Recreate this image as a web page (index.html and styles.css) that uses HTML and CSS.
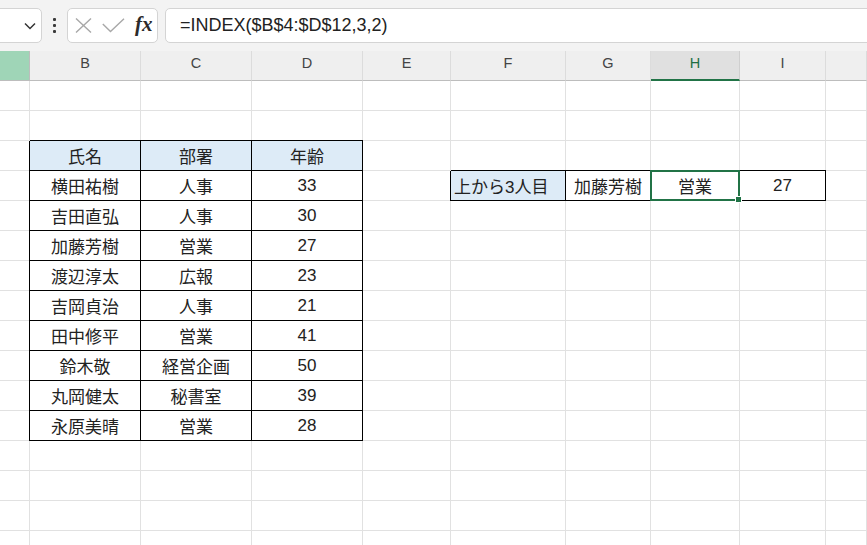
FILE: index.html
```html
<!DOCTYPE html>
<html lang="ja">
<head>
<meta charset="utf-8">
<title>Excel INDEX</title>
<link rel="stylesheet" href="styles.css">
</head>
<body>
<div class="app">
  <div class="toolbar">
    <div class="namebox">
      <svg class="chev" width="12" height="8" viewBox="0 0 12 8"><path d="M1 1.5 L6 6.5 L11 1.5" fill="none" stroke="#333" stroke-width="1.5"/></svg>
    </div>
    <div class="more"><span></span><span></span><span></span></div>
    <div class="fxbox">
      <svg class="ic-x" width="17" height="15" viewBox="0 0 17 15"><path d="M1 0.5 L16 14.5 M16 0.5 L1 14.5" fill="none" stroke="#a8a8a8" stroke-width="1.4"/></svg>
      <svg class="ic-ok" width="23" height="15" viewBox="0 0 23 15"><path d="M0.8 6 L8.5 13.6 L22 0.8" fill="none" stroke="#a8a8a8" stroke-width="1.4"/></svg>
      <span class="fx">fx</span>
    </div>
    <div class="formula">=INDEX($B$4:$D$12,3,2)</div>
  </div>

  <div class="cols">
    <div class="hd hd-a"></div>
    <div class="hd">B</div>
    <div class="hd">C</div>
    <div class="hd">D</div>
    <div class="hd">E</div>
    <div class="hd">F</div>
    <div class="hd">G</div>
    <div class="hd hd-on">H</div>
    <div class="hd">I</div>
    <div class="hd"></div>
  </div>

  <div class="sheet">
    <!-- row 1 -->
    <div class="c"></div><div class="c"></div><div class="c"></div><div class="c"></div><div class="c"></div><div class="c"></div><div class="c"></div><div class="c"></div><div class="c"></div><div class="c"></div>
    <!-- row 2 -->
    <div class="c"></div><div class="c"></div><div class="c"></div><div class="c"></div><div class="c"></div><div class="c"></div><div class="c"></div><div class="c"></div><div class="c"></div><div class="c"></div>
    <!-- row 3 -->
    <div class="c"></div><div class="c t h">氏名</div><div class="c t h">部署</div><div class="c t h">年齢</div><div class="c"></div><div class="c"></div><div class="c"></div><div class="c"></div><div class="c"></div><div class="c"></div>
    <!-- row 4 -->
    <div class="c"></div><div class="c t">横田祐樹</div><div class="c t">人事</div><div class="c t">33</div><div class="c"></div>
    <div class="c t h l">上から3人目</div><div class="c t">加藤芳樹</div><div class="c t selcell">営業<div class="sel"><div class="handle"></div></div></div><div class="c t">27</div><div class="c"></div>
    <!-- row 5 -->
    <div class="c"></div><div class="c t">吉田直弘</div><div class="c t">人事</div><div class="c t">30</div><div class="c"></div><div class="c"></div><div class="c"></div><div class="c"></div><div class="c"></div><div class="c"></div>
    <!-- row 6 -->
    <div class="c"></div><div class="c t">加藤芳樹</div><div class="c t">営業</div><div class="c t">27</div><div class="c"></div><div class="c"></div><div class="c"></div><div class="c"></div><div class="c"></div><div class="c"></div>
    <!-- row 7 -->
    <div class="c"></div><div class="c t">渡辺淳太</div><div class="c t">広報</div><div class="c t">23</div><div class="c"></div><div class="c"></div><div class="c"></div><div class="c"></div><div class="c"></div><div class="c"></div>
    <!-- row 8 -->
    <div class="c"></div><div class="c t">吉岡貞治</div><div class="c t">人事</div><div class="c t">21</div><div class="c"></div><div class="c"></div><div class="c"></div><div class="c"></div><div class="c"></div><div class="c"></div>
    <!-- row 9 -->
    <div class="c"></div><div class="c t">田中修平</div><div class="c t">営業</div><div class="c t">41</div><div class="c"></div><div class="c"></div><div class="c"></div><div class="c"></div><div class="c"></div><div class="c"></div>
    <!-- row 10 -->
    <div class="c"></div><div class="c t">鈴木敬</div><div class="c t">経営企画</div><div class="c t">50</div><div class="c"></div><div class="c"></div><div class="c"></div><div class="c"></div><div class="c"></div><div class="c"></div>
    <!-- row 11 -->
    <div class="c"></div><div class="c t">丸岡健太</div><div class="c t">秘書室</div><div class="c t">39</div><div class="c"></div><div class="c"></div><div class="c"></div><div class="c"></div><div class="c"></div><div class="c"></div>
    <!-- row 12 -->
    <div class="c"></div><div class="c t">永原美晴</div><div class="c t">営業</div><div class="c t">28</div><div class="c"></div><div class="c"></div><div class="c"></div><div class="c"></div><div class="c"></div><div class="c"></div>
    <!-- row 13 -->
    <div class="c"></div><div class="c"></div><div class="c"></div><div class="c"></div><div class="c"></div><div class="c"></div><div class="c"></div><div class="c"></div><div class="c"></div><div class="c"></div>
    <!-- row 14 -->
    <div class="c"></div><div class="c"></div><div class="c"></div><div class="c"></div><div class="c"></div><div class="c"></div><div class="c"></div><div class="c"></div><div class="c"></div><div class="c"></div>
    <!-- row 15 -->
    <div class="c"></div><div class="c"></div><div class="c"></div><div class="c"></div><div class="c"></div><div class="c"></div><div class="c"></div><div class="c"></div><div class="c"></div><div class="c"></div>
    <!-- row 16 -->
    <div class="c"></div><div class="c"></div><div class="c"></div><div class="c"></div><div class="c"></div><div class="c"></div><div class="c"></div><div class="c"></div><div class="c"></div><div class="c"></div>
  </div>
</div>
</body>
</html>
```

FILE: styles.css
```css
* { box-sizing: border-box; }
html, body { margin: 0; padding: 0; }
body {
  width: 867px;
  height: 545px;
  overflow: hidden;
  background: #fff;
  font-family: "Liberation Sans", "Noto Sans CJK JP", sans-serif;
}
.app { width: 867px; overflow: hidden; }

/* ---------- toolbar ---------- */
.toolbar {
  height: 51px;
  background: #f3f3f3;
  display: flex;
  align-items: flex-start;
  padding-top: 8px;
}
.namebox {
  width: 53px;
  height: 35px;
  margin-left: -11px;
  background: #fff;
  border: 1px solid #d4d4d4;
  border-radius: 5px;
  display: flex;
  align-items: center;
  justify-content: flex-end;
  padding-right: 5px;
}
.chev { display: block; }
.more {
  width: 25px;
  height: 35px;
  display: flex;
  flex-direction: column;
  align-items: center;
  justify-content: center;
  gap: 3px;
}
.more span {
  width: 3px;
  height: 3px;
  background: #3a3a3a;
  border-radius: 1px;
}
.fxbox {
  width: 91px;
  height: 35px;
  background: #fff;
  border: 1px solid #d4d4d4;
  border-radius: 5px;
  display: flex;
  align-items: center;
}
.ic-x { margin-left: 7px; display: block; }
.ic-ok { margin-left: 10px; display: block; }
.fx {
  margin-left: 10px;
  font-family: "Liberation Serif", "DejaVu Serif", serif;
  font-style: italic;
  font-weight: bold;
  font-size: 21px;
  color: #2b2b2b;
  line-height: 1;
  margin-top: -2px;
}
.formula {
  flex: 1;
  margin-left: 7px;
  margin-right: -20px;
  height: 35px;
  background: #fff;
  border: 1px solid #d4d4d4;
  border-radius: 5px;
  display: flex;
  align-items: center;
  padding-left: 14px;
  font-size: 18px;
  color: #222;
  white-space: nowrap;
}

/* ---------- column headers ---------- */
.cols, .sheet {
  display: grid;
  grid-template-columns: 30px 111px 111px 111px 88px 115px 85px 89px 86px 1fr;
}
.cols { grid-auto-rows: 30px; }
.hd {
  background: #efefef;
  border-right: 1px solid #dcdcdc;
  border-bottom: 1px solid #bdbdbd;
  display: flex;
  align-items: center;
  justify-content: center;
  padding-bottom: 5px;
  font-size: 14.5px;
  color: #444;
}
.hd-a { background: #9fd5b7; border-right-color: #bdbdbd; }
.hd-on {
  background: #e0e0e0;
  color: #1e6e42;
  border-bottom: 2px solid #217346;
  border-right-color: #cfcfcf;
  padding-bottom: 4px;
}

/* ---------- cells ---------- */
.sheet { grid-auto-rows: 30px; }
.c {
  border-right: 1px solid #e1e1e1;
  border-bottom: 1px solid #e1e1e1;
  display: flex;
  align-items: center;
  justify-content: center;
  white-space: nowrap;
  font-size: 17px;
  color: #222;
}
.t {
  border-right-color: #000;
  border-bottom-color: #000;
  box-shadow: -1px 0 0 #000, 0 -1px 0 #000;
}
.h { background: #ddebf7; }
.l { justify-content: flex-start; padding-left: 3px; }
.selcell { position: relative; }
.sel {
  position: absolute;
  top: -1px;
  left: -1px;
  right: -1px;
  bottom: -1px;
  border: 2px solid #217346;
}
.handle {
  position: absolute;
  right: -4px;
  bottom: -4px;
  width: 7px;
  height: 7px;
  background: #217346;
  border: 1px solid #fff;
}
```
